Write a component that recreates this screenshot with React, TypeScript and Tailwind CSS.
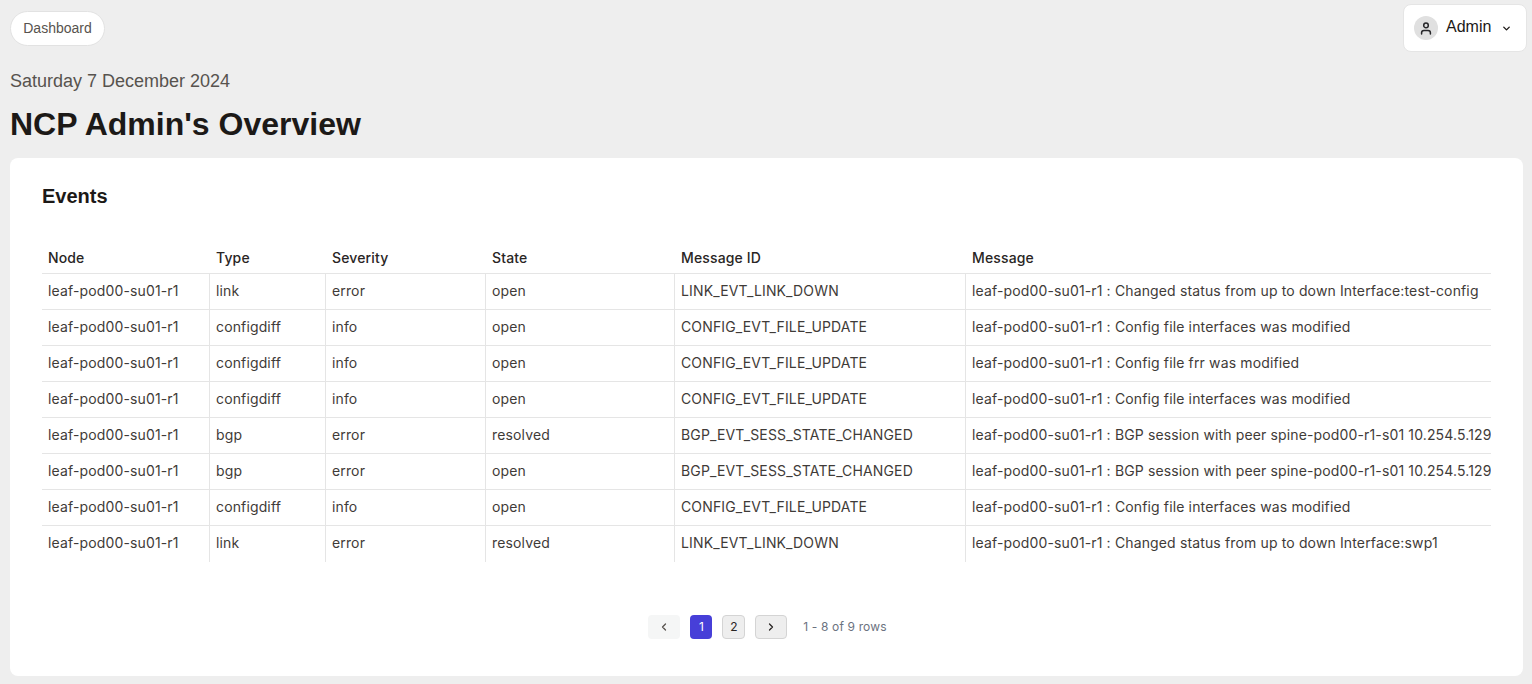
import { ChevronDown, ChevronLeft, ChevronRight } from "lucide-react";

const rows = [
  ["link", "error", "open", "LINK_EVT_LINK_DOWN", "Changed status from up to down Interface:test-config"],
  ["configdiff", "info", "open", "CONFIG_EVT_FILE_UPDATE", "Config file interfaces was modified"],
  ["configdiff", "info", "open", "CONFIG_EVT_FILE_UPDATE", "Config file frr was modified"],
  ["configdiff", "info", "open", "CONFIG_EVT_FILE_UPDATE", "Config file interfaces was modified"],
  ["bgp", "error", "resolved", "BGP_EVT_SESS_STATE_CHANGED", "BGP session with peer spine-pod00-r1-s01 10.254.5.129"],
  ["bgp", "error", "open", "BGP_EVT_SESS_STATE_CHANGED", "BGP session with peer spine-pod00-r1-s01 10.254.5.129"],
  ["configdiff", "info", "open", "CONFIG_EVT_FILE_UPDATE", "Config file interfaces was modified"],
  ["link", "error", "resolved", "LINK_EVT_LINK_DOWN", "Changed status from up to down Interface:swp1"],
];

const headers = ["Node", "Type", "Severity", "State", "Message ID", "Message"];
const node = "leaf-pod00-su01-r1";

function UserIcon() {
  return (
    <svg width="12" height="13" viewBox="0 0 12 13" fill="none" stroke="#27272a" strokeWidth="1.5">
      <circle cx="6" cy="3.4" r="2.3" />
      <path d="M1.6 12v-1.2c0-1.4 1-2.3 2.3-2.3h4.2c1.3 0 2.3.9 2.3 2.3V12" strokeLinecap="round" />
    </svg>
  );
}

export default function App() {
  return (
    <div className="h-[684px] overflow-hidden bg-[#eeeeee] px-[10px] pr-[9px] font-['Liberation_Sans',sans-serif]">
      <div className="flex items-start justify-between">
        <a className="mt-[11px] flex h-[35px] w-[95px] items-center justify-center rounded-full border border-[#e2e2e2] bg-white pb-[2px] text-sm text-[#57534e]">
          Dashboard
        </a>
        <div className="mt-1 -mr-1 flex h-[48px] w-[124px] items-center rounded-lg border border-[#e5e5e5] bg-white pl-[10px]">
          <span className="flex h-6 w-6 items-center justify-center rounded-full bg-[#e0e0e0]">
            <UserIcon />
          </span>
          <span className="ml-2 pb-[2px] text-base text-[#1c1917]">Admin</span>
          <ChevronDown className="ml-[10px] h-[11px] w-[11px] text-[#1c1917]" strokeWidth={3} />
        </div>
      </div>

      <p className="mt-[15px] text-lg leading-[28px] text-[#57534e]">Saturday 7 December 2024</p>
      <h1 className="mt-[9px] text-[32px] leading-[40px] font-bold text-[#1c1917]">NCP Admin's Overview</h1>

      <div className="mt-[14px] h-[518px] rounded-lg bg-white pt-[24px] pr-[32px] pl-[32px]">
        <h2 className="text-xl leading-[28px] font-bold text-[#1c1917]">Events</h2>

        <div className="mt-[32px] overflow-hidden font-['Inter',sans-serif] tracking-[0.14px]">
          <table className="w-[1500px] table-fixed border-separate border-spacing-0 text-sm text-[#3f3b38]">
            <colgroup>
              <col className="w-[168px]" />
              <col className="w-[116px]" />
              <col className="w-[160px]" />
              <col className="w-[189px]" />
              <col className="w-[291px]" />
              <col />
            </colgroup>
            <thead>
              <tr className="h-[32px]">
                {headers.map((h) => (
                  <th key={h} className="border-b border-[#e5e5e5] px-[6px] text-left font-medium text-[#292524]">
                    {h}
                  </th>
                ))}
              </tr>
            </thead>
            <tbody>
              {rows.map((r, i) => {
                const line = i < rows.length - 1 ? "border-b border-[#e5e5e5]" : "";
                return (
                  <tr key={i} className="h-[36px]">
                    <td className={`border-r border-r-[#e5e5e5] px-[6px] pb-[2px] whitespace-nowrap ${line}`}>{node}</td>
                    <td className={`border-r border-r-[#e5e5e5] px-[6px] pb-[2px] ${line}`}>{r[0]}</td>
                    <td className={`border-r border-r-[#e5e5e5] px-[6px] pb-[2px] ${line}`}>{r[1]}</td>
                    <td className={`border-r border-r-[#e5e5e5] px-[6px] pb-[2px] ${line}`}>{r[2]}</td>
                    <td className={`border-r border-r-[#e5e5e5] px-[6px] pb-[2px] whitespace-nowrap ${line}`}>{r[3]}</td>
                    <td className={`px-[6px] pb-[2px] whitespace-nowrap ${line}`}>
                      {node} : {r[4]}
                    </td>
                  </tr>
                );
              })}
            </tbody>
          </table>
        </div>

        <div className="mt-[53px] flex items-center justify-center pl-[2px] font-['Inter',sans-serif]">
          <button className="flex h-6 w-8 items-center justify-center rounded-sm bg-[#f5f6f6] text-[#57534e]">
            <ChevronLeft className="h-3 w-3" strokeWidth={2.5} />
          </button>
          <button className="ml-[10px] h-6 w-[22px] rounded-sm bg-[#473fd8] text-xs text-white">1</button>
          <button className="ml-[10px] h-6 w-[23px] rounded-sm border border-[#d4d4d4] bg-[#eeeeee] text-xs text-[#292524]">
            2
          </button>
          <button className="ml-[10px] flex h-6 w-8 items-center justify-center rounded-sm border border-[#d4d4d4] bg-[#eeeeee] text-[#292524]">
            <ChevronRight className="h-3 w-3" strokeWidth={2.5} />
          </button>
          <span className="ml-4 text-xs tracking-[0.14px] text-[#6b7280]">1 - 8 of 9 rows</span>
        </div>
      </div>
    </div>
  );
}
